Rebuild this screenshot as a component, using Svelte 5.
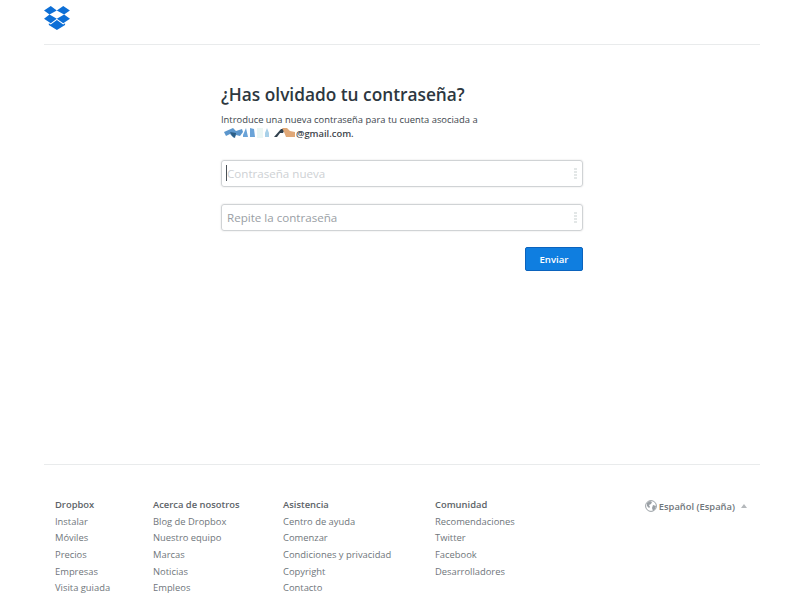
<script>
	const columns = [
		{ title: 'Dropbox', width: 98, links: ['Instalar', 'Móviles', 'Precios', 'Empresas', 'Visita guiada'] },
		{ title: 'Acerca de nosotros', width: 130, links: ['Blog de Dropbox', 'Nuestro equipo', 'Marcas', 'Noticias', 'Empleos'] },
		{ title: 'Asistencia', width: 152, links: ['Centro de ayuda', 'Comenzar', 'Condiciones y privacidad', 'Copyright', 'Contacto'] },
		{ title: 'Comunidad', width: 150, links: ['Recomendaciones', 'Twitter', 'Facebook', 'Desarrolladores'] }
	];
</script>

<div class="page">
	<header class="top">
		<svg class="logo" width="26" height="25" viewBox="0 0 27 26" aria-label="Dropbox">
			<path fill="#0d6fd6" d="M7 1 0 5.6l5.7 4.4L13.3 5.6zM20 1l-6.7 4.6 7.6 4.4 6-4.4zM0 14.4l7 4.6 6.3-4.7-7.6-4.3zM13.3 14.3 20 19l7-4.6-6.1-4.4zM13.4 15.6 7 20.3l-2-1.2v1.6L13.4 26l8.5-5.3v-1.6l-2 1.2z" />
		</svg>
	</header>

	<main class="main">
		<h1>¿Has olvidado tu contraseña?</h1>
		<p class="intro">
			Introduce una nueva contraseña para tu cuenta asociada a<br />
			<span class="email">
				<svg class="scribble" width="75" height="14" viewBox="0 0 75 14" aria-hidden="true">
					<path fill="#5b96cc" d="M3 6l9-4 3 3 6-2 1 3-3 4-4-1-2 3-4-4-4 2z" />
					<path fill="#2d5f86" d="M9 6l6 1-1 5-3-2z" />
					<path fill="#6aa3d8" d="M22 9l3-7 2 9h-5zM29 2l4 1 1 8h-5z" />
					<path fill="#eaf6f4" d="M36 2h6v10h-6z" />
					<path fill="#a8d0e8" d="M46 2l2 5v4h-4v-4z" />
					<path fill="#2f3f4c" d="M53 11l7-8 4 0-2 4-3 0-3 4z" />
					<path fill="#e0a878" d="M61 2h5l3 3 5 1v5h-9l-2-5z" />
				</svg>@gmail.com.
			</span>
		</p>

		<form class="form" on:submit|preventDefault>
			<div class="field focused">
				<span class="caret"></span>
				<input type="password" placeholder="Contraseña nueva" />
				<span class="dots"><i></i><i></i><i></i><i></i></span>
			</div>
			<div class="field">
				<input type="password" placeholder="Repite la contraseña" />
				<span class="dots"><i></i><i></i><i></i><i></i></span>
			</div>
			<div class="actions">
				<button type="submit">Enviar</button>
			</div>
		</form>
	</main>

	<footer class="footer">
		<div class="cols">
			{#each columns as col}
				<ul class="col" style="width: {col.width}px">
					<li class="head">{col.title}</li>
					{#each col.links as link}
						<li>{link}</li>
					{/each}
				</ul>
			{/each}
		</div>
		<div class="lang">
			<svg width="12" height="12" viewBox="0 0 12 12" aria-hidden="true">
				<circle cx="6" cy="6" r="5.4" fill="#fff" stroke="#9aa0a5" />
				<path fill="#9aa0a5" d="M2 3l3-2 2 1-1 2-2 1 1 2-1 1-2-2zM8 5l3 1-1 3-2 2-1-3z" />
			</svg>
			<span>Español (España)</span>
			<span class="arrow"></span>
		</div>
	</footer>
</div>

<style>
	:global(body) {
		background: #fff;
		font-family: 'Open Sans', 'Noto Sans', sans-serif;
		color: #3d464d;
	}

	.page {
		width: 800px;
		height: 600px;
		padding: 0 40px 0 44px;
		box-sizing: border-box;
		display: flex;
		flex-direction: column;
		overflow: hidden;
	}

	.top {
		flex: none;
		height: 39px;
		border-bottom: 1px solid #e9ebec;
		padding-top: 5px;
	}

	.logo {
		display: block;
	}

	.main {
		flex: 1;
		width: 362px;
		margin-left: 177px;
		padding-top: 37px;
	}

	h1 {
		margin: 0;
		font-size: 17.3px;
		line-height: 26px;
		font-weight: 600;
		color: #2d3740;
	}

	.intro {
		margin: 5px 0 0;
		font-size: 9.4px;
		line-height: 13px;
		color: #3d464d;
	}

	.email {
		display: inline-flex;
		align-items: center;
		font-weight: 600;
	}

	.scribble {
		display: block;
	}

	.form {
		margin-top: 17px;
	}

	.field {
		position: relative;
		height: 27px;
		margin-bottom: 17px;
		border: 1px solid #d0d3d5;
		border-radius: 3px;
		box-sizing: border-box;
		box-shadow: 0 0 2px rgba(0, 0, 0, 0.14);
	}

	.field input {
		width: 100%;
		height: 100%;
		box-sizing: border-box;
		border: 0;
		outline: 0;
		background: transparent;
		padding: 0 24px 1px 5px;
		font-family: inherit;
		font-size: 11.6px;
		color: #3d464d;
	}

	.field input::placeholder {
		color: #9aa0a5;
		opacity: 1;
	}

	.field.focused input::placeholder {
		color: #ced1d4;
	}

	.caret {
		position: absolute;
		left: 4px;
		top: 4px;
		width: 1px;
		height: 16px;
		background: #4a5157;
	}

	.dots {
		position: absolute;
		right: 5px;
		top: 7px;
		display: flex;
		flex-direction: column;
		gap: 1px;
	}

	.dots i {
		display: block;
		width: 3px;
		height: 2px;
		background: #e3e7e7;
	}

	.actions {
		display: flex;
		justify-content: flex-end;
		margin-top: -1px;
	}

	button {
		width: 58px;
		height: 24px;
		border: 1px solid #0b63bd;
		border-radius: 2px;
		background: #0f7ee0;
		color: #fff;
		font-family: inherit;
		font-size: 9.6px;
		font-weight: 600;
		padding: 0;
	}

	.footer {
		flex: none;
		height: 136px;
		box-sizing: border-box;
		border-top: 1px solid #e9ebec;
		padding: 32px 0 0 11px;
		display: flex;
		justify-content: space-between;
		font-size: 9.4px;
		color: #6f767b;
	}

	.cols {
		display: flex;
	}

	.col {
		list-style: none;
		margin: 0;
		padding: 0;
	}

	.col li {
		height: 16.7px;
		line-height: 16.7px;
		white-space: nowrap;
	}

	.col .head {
		font-weight: 600;
		color: #5c6368;
	}

	.lang {
		display: flex;
		align-items: center;
		align-self: flex-start;
		gap: 2px;
		height: 18px;
		margin-right: 13px;
		font-weight: 600;
		color: #6f767b;
	}

	.arrow {
		width: 0;
		height: 0;
		margin-left: 4px;
		border: 3.5px solid transparent;
		border-top: 0;
		border-bottom: 4px solid #b4b8bb;
	}
</style>
